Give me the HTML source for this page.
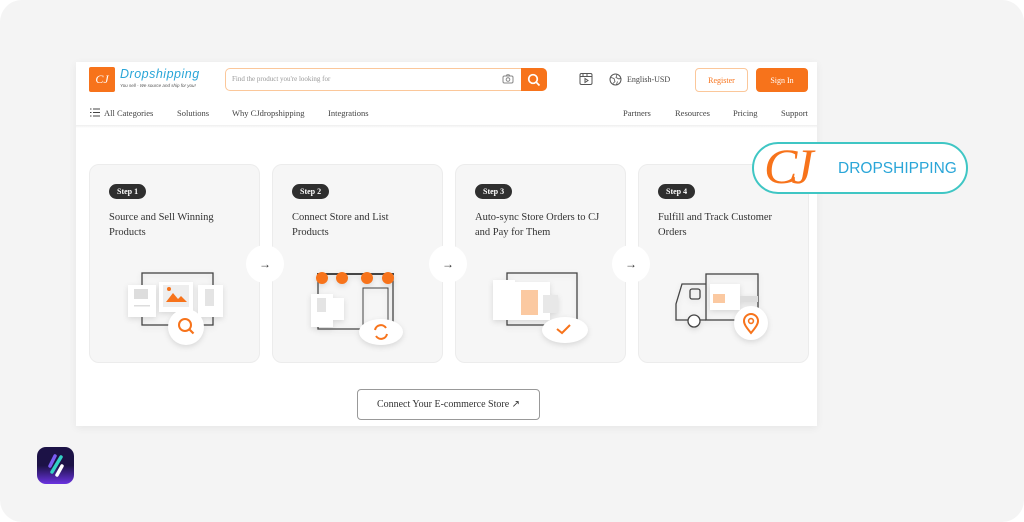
<!DOCTYPE html>
<html><head><meta charset="utf-8"><style>
*{margin:0;padding:0;box-sizing:border-box}
body{width:1024px;height:522px;background:#fff;font-family:"Liberation Serif",serif;position:relative;overflow:hidden;color:#333}
.abs{position:absolute}
.bg{left:0;top:0;width:1024px;height:522px;background:#f4f4f4;border-radius:22px}
.page{left:76px;top:62px;width:741px;height:364px;background:#fff;box-shadow:0 2px 8px rgba(0,0,0,.06)}
.nav{font-size:8.5px;color:#444}
.card{width:171px;height:199px;top:164px;background:#f6f6f6;border:1px solid #ececec;border-radius:10px}
.step{left:19px;top:19px;background:#2f2f2f;color:#fff;font-size:8px;font-weight:bold;border-radius:9px;padding:3px 8px}
.title{left:19px;top:45px;font-size:10.5px;line-height:15px;color:#333;width:128px}
.arr{width:38px;height:38px;border-radius:50%;background:#fff;top:245px;font-size:12px;display:flex;align-items:center;justify-content:center;color:#333}
.sh{filter:drop-shadow(0 2px 3px rgba(0,0,0,.12))}
</style></head><body>
<div class="abs bg"></div>
<div class="abs page"></div>
<div class="abs" style="left:89px;top:67px;width:26px;height:25px;background:#f7731b;border-radius:2px;color:#fff;font-style:italic;font-size:12px;display:flex;align-items:center;justify-content:center">CJ</div>
<div class="abs" style="left:120px;top:67px;font-family:'Liberation Sans',sans-serif;font-style:italic;color:#2aa6d8;font-size:12.5px;letter-spacing:.5px">Dropshipping</div>
<div class="abs" style="left:120px;top:83px;font-family:'Liberation Sans',sans-serif;font-style:italic;color:#555;font-size:4.5px">You sell - We source and ship for you!</div>
<div class="abs" style="left:225px;top:68px;width:322px;height:23px;border:1px solid #fbc79a;border-radius:5px"></div>
<div class="abs" style="left:232px;top:75px;font-size:7px;color:#999">Find the product you're looking for</div>
<svg class="abs" style="left:502px;top:73px" width="12" height="12" viewBox="0 0 12 12"><rect x="1" y="3" width="10" height="7" rx="1.5" fill="none" stroke="#888"/><circle cx="6" cy="6.5" r="1.8" fill="none" stroke="#888"/><path d="M4 3l1-1.3h2L8 3" fill="none" stroke="#888"/></svg>
<div class="abs" style="left:521px;top:68px;width:26px;height:23px;background:#f7731b;border-radius:0 5px 5px 0"></div>
<svg class="abs" style="left:527px;top:73px" width="14" height="14" viewBox="0 0 14 14"><circle cx="6" cy="6" r="4.3" fill="none" stroke="#fff" stroke-width="1.7"/><path d="M9.2 9.2L12.5 12.5" stroke="#fff" stroke-width="1.7"/></svg>
<svg class="abs" style="left:579px;top:72px" width="14" height="14" viewBox="0 0 14 14"><rect x="1" y="1.5" width="12" height="11" rx="1.5" fill="none" stroke="#555"/><path d="M1 4.5h12M4 1.5v3M8 1.5v3M6 6.5v4l3-2z" fill="none" stroke="#555"/></svg>
<svg class="abs" style="left:609px;top:73px" width="13" height="13" viewBox="0 0 13 13"><circle cx="6.5" cy="6.5" r="5.5" fill="none" stroke="#555"/><path d="M2 4.5l3 1 1 3-2 2M8 1.5l-1 3 3 1.5 2-1M7.5 11.5l1-3" fill="none" stroke="#555" stroke-width=".8"/></svg>
<div class="abs nav" style="left:627px;top:75px;font-size:8px">English-USD</div>
<div class="abs" style="left:695px;top:68px;width:53px;height:24px;border:1px solid #fbc79a;border-radius:4px;color:#f7731b;font-size:8px;display:flex;align-items:center;justify-content:center">Register</div>
<div class="abs" style="left:756px;top:68px;width:52px;height:24px;background:#f7731b;border-radius:4px;color:#fff;font-size:8px;display:flex;align-items:center;justify-content:center">Sign In</div>
<svg class="abs" style="left:90px;top:108px" width="10" height="9" viewBox="0 0 10 9"><path d="M0 1h1.5M3 1h7M0 4.5h1.5M3 4.5h7M0 8h1.5M3 8h7" stroke="#444"/></svg>
<div class="abs nav" style="left:104px;top:108px">All Categories</div>
<div class="abs nav" style="left:177px;top:108px">Solutions</div>
<div class="abs nav" style="left:232px;top:108px">Why CJdropshipping</div>
<div class="abs nav" style="left:328px;top:108px">Integrations</div>
<div class="abs nav" style="left:623px;top:108px">Partners</div>
<div class="abs nav" style="left:675px;top:108px">Resources</div>
<div class="abs nav" style="left:733px;top:108px">Pricing</div>
<div class="abs nav" style="left:781px;top:108px">Support</div>
<div class="abs" style="left:76px;top:125px;width:741px;height:3px;background:linear-gradient(#eee,#fff)"></div>
<div class="abs card" style="left:89px"><div class="abs step">Step 1</div><div class="abs title">Source and Sell Winning Products</div>
<svg class="abs sh" style="left:35px;top:105px" width="105" height="80" viewBox="0 0 105 80"><rect x="17" y="3" width="71" height="52" fill="none" stroke="#444" stroke-width="1.3"/><rect x="3" y="15" width="28" height="32" fill="#fff"/><rect x="9" y="19" width="14" height="10" fill="#ddd"/><rect x="9" y="35" width="16" height="1.5" fill="#ddd"/><rect x="34" y="12" width="34" height="30" fill="#fff"/><rect x="38" y="15" width="26" height="22" fill="#eee"/><path d="M41 32l7-9 5 6 3-3 6 6z" fill="#f7731b"/><circle cx="44" cy="19" r="2" fill="#f7731b"/><rect x="73" y="15" width="25" height="32" fill="#fff"/><rect x="80" y="19" width="9" height="17" fill="#e4e4e4"/><circle cx="61" cy="57" r="18" fill="#fff"/><circle cx="60" cy="55" r="6" fill="none" stroke="#f7731b" stroke-width="2"/><path d="M64.5 59.5l4 4" stroke="#f7731b" stroke-width="2.2"/></svg></div>
<div class="abs card" style="left:272px"><div class="abs step">Step 2</div><div class="abs title">Connect Store and List Products</div>
<svg class="abs sh" style="left:35px;top:105px" width="105" height="80" viewBox="0 0 105 80"><path d="M10 4v55h75V4" fill="none" stroke="#444" stroke-width="1.3"/><rect x="9" y="3" width="77" height="2" fill="#444"/><g fill="#f7731b"><circle cx="14" cy="8" r="6"/><circle cx="34" cy="8" r="6"/><circle cx="59" cy="8" r="6"/><circle cx="80" cy="8" r="6"/></g><rect x="55" y="18" width="25" height="41" fill="none" stroke="#444"/><rect x="3" y="24" width="22" height="33" fill="#fff"/><rect x="9" y="28" width="9" height="14" fill="#e4e4e4"/><rect x="25" y="28" width="11" height="22" fill="#fff"/><ellipse cx="73" cy="62" rx="22" ry="13" fill="#fff"/><path d="M67 60a6 6 0 0 1 11-2M79 64a6 6 0 0 1-11 2" fill="none" stroke="#f7731b" stroke-width="2"/></svg></div>
<div class="abs card" style="left:455px"><div class="abs step">Step 3</div><div class="abs title" style="width:135px">Auto-sync Store Orders to CJ and Pay for Them</div>
<svg class="abs sh" style="left:35px;top:105px" width="105" height="80" viewBox="0 0 105 80"><rect x="16" y="3" width="70" height="52" fill="none" stroke="#444" stroke-width="1.3"/><rect x="2" y="10" width="22" height="40" fill="#fff"/><rect x="24" y="12" width="35" height="38" fill="#fff"/><rect x="30" y="20" width="17" height="25" fill="#fbc9a1"/><rect x="52" y="25" width="15" height="18" fill="#e8e8e8"/><ellipse cx="74" cy="60" rx="23" ry="13" fill="#fff"/><path d="M66 59l5 4 8-8" fill="none" stroke="#f7731b" stroke-width="2"/></svg></div>
<div class="abs card" style="left:638px"><div class="abs step">Step 4</div><div class="abs title">Fulfill and Track Customer Orders</div>
<svg class="abs sh" style="left:35px;top:105px" width="105" height="80" viewBox="0 0 105 80"><rect x="32" y="4" width="52" height="46" fill="none" stroke="#444" stroke-width="1.3"/><path d="M32 14H8L2 34v16h30" fill="none" stroke="#444" stroke-width="1.3"/><rect x="16" y="19" width="10" height="10" rx="2" fill="none" stroke="#444" stroke-width="1.3"/><circle cx="20" cy="51" r="6" fill="#fff" stroke="#444" stroke-width="1.3"/><rect x="36" y="14" width="30" height="26" fill="#fff"/><rect x="39" y="24" width="12" height="9" fill="#fbc9a1"/><rect x="66" y="26" width="18" height="6" fill="#ddd"/><circle cx="77" cy="53" r="17" fill="#fff"/><path d="M77 63c-5-6-7-9-7-12a7 7 0 0 1 14 0c0 3-2 6-7 12z" fill="none" stroke="#f7731b" stroke-width="2"/><circle cx="77" cy="51" r="2.4" fill="none" stroke="#f7731b" stroke-width="1.6"/></svg></div>
<div class="abs arr" style="left:246px">→</div>
<div class="abs arr" style="left:429px">→</div>
<div class="abs arr" style="left:612px">→</div>
<div class="abs" style="left:752px;top:142px;width:216px;height:52px;border:2px solid #3fc6c4;border-radius:26px;background:#fff"></div>
<div class="abs" style="left:764px;top:136px;font-family:'Liberation Serif',serif;font-style:italic;color:#f7731b;font-size:50px;line-height:60px;letter-spacing:-6px">CJ</div>
<div class="abs" style="left:838px;top:160px;font-family:'Liberation Sans',sans-serif;color:#2aa6d8;font-size:15.5px">DROPSHIPPING</div>
<div class="abs" style="left:357px;top:389px;width:183px;height:31px;border:1px solid #999;border-radius:4px;font-size:10px;color:#333;display:flex;align-items:center;justify-content:center">Connect Your E-commerce Store ↗</div>
<div class="abs" style="left:37px;top:447px;width:37px;height:37px;border-radius:9px;background:linear-gradient(#1c1246 50%,#6a33e0)"></div>
<svg class="abs" style="left:37px;top:447px" width="37" height="37" viewBox="0 0 37 37"><path d="M13 19l5-10" stroke="#7b5cf5" stroke-width="3.5" stroke-linecap="round"/><path d="M15 25l9-15" stroke="#33d1c5" stroke-width="3.5" stroke-linecap="round"/><path d="M20 28l5-9" stroke="#fff" stroke-width="3.5" stroke-linecap="round"/></svg>
</body></html>
